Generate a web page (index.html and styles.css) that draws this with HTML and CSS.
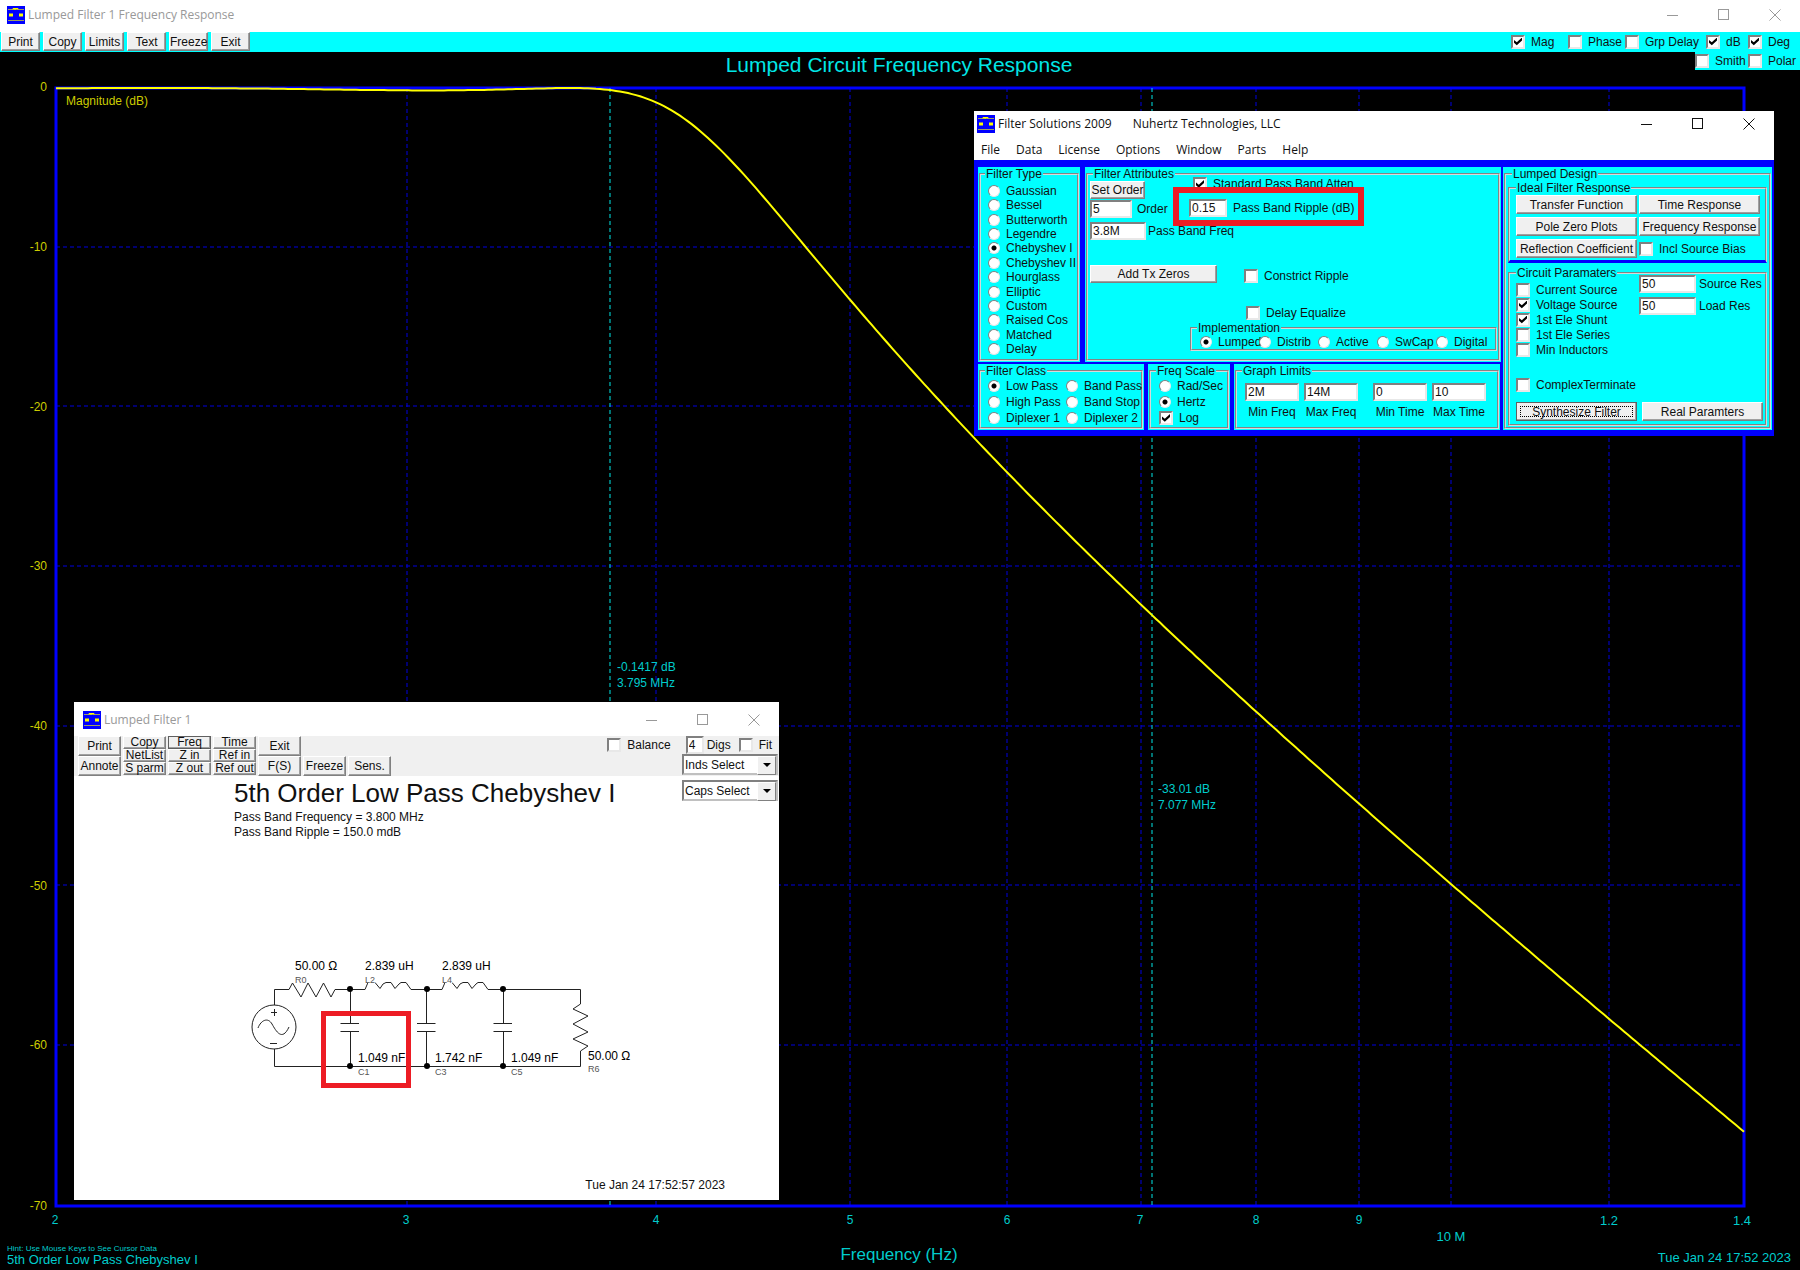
FILE: index.html
```html
<!DOCTYPE html>
<html lang="en">
<head>
  <meta charset="utf-8">
  <title>Lumped Filter 1 Frequency Response</title>
<link rel="stylesheet" href="styles.css">
</head>
<body>
  <svg class="defs" width="0" height="0">
    <symbol id="app" viewBox="0 0 18 18">
      <rect width="18" height="18" fill="#0000ff"/>
      <path d="M1 3.5h16M1 14.500h16" stroke="#a0a060" stroke-width="1"/>
      <path d="M6 3.500v-1h5v1M8 2.500v1.500" stroke="#ffff00" fill="none"/>
      <path d="M2 7.500h4v3h-4zM12 7.500h4v3h-4z" fill="#ffff00"/>
    </symbol>
    <symbol id="min" viewBox="0 0 12 12"><path d="M0 6.500h11" stroke="currentColor"/></symbol>
    <symbol id="max" viewBox="0 0 12 12"><rect x=".5" y=".5" width="10" height="10" fill="none" stroke="currentColor"/></symbol>
    <symbol id="close" viewBox="0 0 12 12"><path d="M.5 .5l11 11M11.500 .5l-11 11" stroke="currentColor"/></symbol>
  </svg>

  <div class="titlebar inactive">
    <svg class="logo"><use href="#app"/></svg>
    <span class="caption">Lumped Filter 1 Frequency Response</span>
    <button class="ctl" aria-label="Minimize"><svg><use href="#min"/></svg></button>
    <button class="ctl" aria-label="Maximize"><svg><use href="#max"/></svg></button>
    <button class="ctl" aria-label="Close"><svg><use href="#close"/></svg></button>
  </div>
  <div class="plot_bar">
    <button class="btn">Print</button>
    <button class="btn">Copy</button>
    <button class="btn">Limits</button>
    <button class="btn">Text</button>
    <button class="btn">Freeze</button>
    <button class="btn">Exit</button>
    <div class="traces">
      <label><input type="checkbox" checked>Mag</label>
      <label><input type="checkbox">Phase</label>
      <label><input type="checkbox">Grp Delay</label>
      <label><input type="checkbox" checked>dB</label>
      <label><input type="checkbox" checked>Deg</label>
    </div>
    <div class="traces2">
      <label><input type="checkbox">Smith</label>
      <label><input type="checkbox">Polar</label>
    </div>
  </div>

  <svg class="plot" viewBox="0 52 1800 1218">
    <text class="plot_title" x="899" y="72">Lumped Circuit Frequency Response</text>
    <g class="grid">
      <path d="M56 247H1743M56 406H1743M56 566H1743M56 726H1743M56 885H1743M56 1045H1743"/>
      <path d="M407 88V1206M656 88V1206M850 88V1206M1007 88V1206M1141 88V1206M1256 88V1206M1359 88V1206M1451 88V1206M1609 88V1206"/>
    </g>
    <rect class="frame" x="56" y="88" width="1688" height="1118"/>
    <path class="cursor" d="M610 88V1206M1152 88V1206"/>
    <path class="curve" id="curve"/>
    <g class="y_axis">
      <text x="47" y="91">0</text>
      <text x="47" y="251">-10</text>
      <text x="47" y="411">-20</text>
      <text x="47" y="570">-30</text>
      <text x="47" y="730">-40</text>
      <text x="47" y="890">-50</text>
      <text x="47" y="1049">-60</text>
      <text x="47" y="1210">-70</text>
      <text class="start" x="66" y="105">Magnitude (dB)</text>
    </g>
    <g class="x_axis">
      <text x="55" y="1224">2</text>
      <text x="406" y="1224">3</text>
      <text x="656" y="1224">4</text>
      <text x="850" y="1224">5</text>
      <text x="1007" y="1224">6</text>
      <text x="1140" y="1224">7</text>
      <text x="1256" y="1224">8</text>
      <text x="1359" y="1224">9</text>
      <text class="t13" x="1451" y="1241">10 M</text>
      <text class="t13" x="1609" y="1225">1.2</text>
      <text class="t13" x="1742" y="1225">1.4</text>
      <text class="start" x="617" y="671">-0.1417 dB</text>
      <text class="start" x="617" y="687">3.795 MHz</text>
      <text class="start" x="1158" y="793">-33.01 dB</text>
      <text class="start" x="1158" y="809">7.077 MHz</text>
      <text class="x_title" x="899" y="1260">Frequency (Hz)</text>
      <text class="start hint" x="7" y="1251">Hint: Use Mouse Keys to See Cursor Data</text>
      <text class="start t13" x="7" y="1264">5th Order Low Pass Chebyshev I</text>
      <text class="end t13" x="1791" y="1262">Tue Jan 24 17:52 2023</text>
    </g>
  </svg>

  <!-- filter setup -->
  <div class="window setup">
    <div class="titlebar">
      <svg class="logo"><use href="#app"/></svg>
      <span class="caption">Filter Solutions 2009</span>
      <span class="caption">Nuhertz Technologies, LLC</span>
      <button class="ctl" aria-label="Minimize"><svg><use href="#min"/></svg></button>
      <button class="ctl" aria-label="Maximize"><svg><use href="#max"/></svg></button>
      <button class="ctl" aria-label="Close"><svg><use href="#close"/></svg></button>
    </div>
    <div class="menu">
      <a href="#">File</a>
      <a href="#">Data</a>
      <a href="#">License</a>
      <a href="#">Options</a>
      <a href="#">Window</a>
      <a href="#">Parts</a>
      <a href="#">Help</a>
    </div>
    <div class="panels">
      <div class="left">
        <div class="top">
          <div class="panel">
            <fieldset class="type">
              <legend>Filter Type</legend>
              <label><input type="radio" name="type">Gaussian</label>
              <label><input type="radio" name="type">Bessel</label>
              <label><input type="radio" name="type">Butterworth</label>
              <label><input type="radio" name="type">Legendre</label>
              <label><input type="radio" name="type" checked>Chebyshev I</label>
              <label><input type="radio" name="type">Chebyshev II</label>
              <label><input type="radio" name="type">Hourglass</label>
              <label><input type="radio" name="type">Elliptic</label>
              <label><input type="radio" name="type">Custom</label>
              <label><input type="radio" name="type">Raised Cos</label>
              <label><input type="radio" name="type">Matched</label>
              <label><input type="radio" name="type">Delay</label>
            </fieldset>
          </div>
          <div class="panel">
            <fieldset class="attrs">
              <legend>Filter Attributes</legend>
              <div class="row row_atten">
                <button class="btn">Set Order</button>
                <label><input type="checkbox" checked>Standard Pass Band Atten</label>
              </div>
              <div class="row row_order">
                <label class="order"><input type="text" value="5">Order</label>
                <label class="ripple"><input type="text" value="0.15">Pass Band Ripple (dB)</label>
              </div>
              <label class="freq"><input type="text" value="3.8M">Pass Band Freq</label>
              <div class="row row_zeros">
                <button class="btn">Add Tx Zeros</button>
                <label><input type="checkbox">Constrict Ripple</label>
              </div>
              <label class="equalize"><input type="checkbox">Delay Equalize</label>
              <fieldset class="impl">
                <legend>Implementation</legend>
                <label><input type="radio" name="impl" checked>Lumped</label>
                <label><input type="radio" name="impl">Distrib</label>
                <label><input type="radio" name="impl">Active</label>
                <label><input type="radio" name="impl">SwCap</label>
                <label><input type="radio" name="impl">Digital</label>
              </fieldset>
            </fieldset>
          </div>
        </div>
        <div class="bottom">
          <div class="panel">
            <fieldset class="class">
              <legend>Filter Class</legend>
              <label><input type="radio" name="class" checked>Low Pass</label>
              <label><input type="radio" name="class">Band Pass</label>
              <label><input type="radio" name="class">High Pass</label>
              <label><input type="radio" name="class">Band Stop</label>
              <label><input type="radio" name="class">Diplexer 1</label>
              <label><input type="radio" name="class">Diplexer 2</label>
            </fieldset>
          </div>
          <div class="panel">
            <fieldset class="scale">
              <legend>Freq Scale</legend>
              <label><input type="radio" name="scale">Rad/Sec</label>
              <label><input type="radio" name="scale" checked>Hertz</label>
              <label><input type="checkbox" checked>Log</label>
            </fieldset>
          </div>
          <div class="panel">
            <fieldset class="limits">
              <legend>Graph Limits</legend>
              <label><input type="text" value="2M">Min Freq</label>
              <label><input type="text" value="14M">Max Freq</label>
              <label class="time"><input type="text" value="0">Min Time</label>
              <label><input type="text" value="10">Max Time</label>
            </fieldset>
          </div>
        </div>
      </div>
      <div class="panel">
        <fieldset class="design">
          <legend>Lumped Design</legend>
          <fieldset class="ideal">
            <legend>Ideal Filter Response</legend>
            <button class="btn">Transfer Function</button>
            <button class="btn">Time Response</button>
            <button class="btn">Pole Zero Plots</button>
            <button class="btn">Frequency Response</button>
            <button class="btn">Reflection Coefficient</button>
            <label><input type="checkbox">Incl Source Bias</label>
          </fieldset>
          <fieldset class="params">
            <legend>Circuit Paramaters</legend>
            <div class="row">
              <div class="checks">
                <label><input type="checkbox">Current Source</label>
                <label><input type="checkbox" checked>Voltage Source</label>
                <label><input type="checkbox" checked>1st Ele Shunt</label>
                <label><input type="checkbox">1st Ele Series</label>
                <label><input type="checkbox">Min Inductors</label>
                <label class="complex"><input type="checkbox">ComplexTerminate</label>
              </div>
              <div class="res">
                <label><input type="text" value="50">Source Res</label>
                <label><input type="text" value="50">Load Res</label>
              </div>
            </div>
            <div class="row actions">
              <button class="btn focused">Synthesize Filter</button>
              <button class="btn">Real Paramters</button>
            </div>
          </fieldset>
        </fieldset>
      </div>
    </div>
  </div>

  <!-- schematic -->
  <div class="window circuit">
    <div class="titlebar inactive">
      <svg class="logo"><use href="#app"/></svg>
      <span class="caption">Lumped Filter 1</span>
      <button class="ctl" aria-label="Minimize"><svg><use href="#min"/></svg></button>
      <button class="ctl" aria-label="Maximize"><svg><use href="#max"/></svg></button>
      <button class="ctl" aria-label="Close"><svg><use href="#close"/></svg></button>
    </div>
    <div class="tools">
      <div class="stack">
        <button class="btn">Print</button>
        <button class="btn">Annote</button>
      </div>
      <div class="stack thin">
        <button class="btn">Copy</button>
        <button class="btn">NetList</button>
        <button class="btn">S parm</button>
      </div>
      <div class="stack thin">
        <button class="btn pressed">Freq</button>
        <button class="btn">Z in</button>
        <button class="btn">Z out</button>
      </div>
      <div class="stack thin">
        <button class="btn">Time</button>
        <button class="btn">Ref in</button>
        <button class="btn">Ref out</button>
      </div>
      <div class="stack">
        <button class="btn">Exit</button>
        <button class="btn">F(S)</button>
      </div>
      <div class="stack low"><button class="btn">Freeze</button></div>
      <div class="stack low"><button class="btn">Sens.</button></div>
      <div class="options">
        <div class="row">
          <label class="balance"><input type="checkbox">Balance</label>
          <label class="digs"><input type="text" value="4">Digs</label>
          <label><input type="checkbox">Fit</label>
        </div>
        <span class="drop"><select aria-label="Inductors"><option>Inds Select</option></select></span>
        <span class="drop second"><select aria-label="Capacitors"><option>Caps Select</option></select></span>
      </div>
    </div>
    <div class="sheet">
      <h1>5th Order Low Pass Chebyshev I</h1>
      <p>Pass Band Frequency = 3.800 MHz</p>
      <p>Pass Band Ripple = 150.0 mdB</p>
      <svg class="schematic" viewBox="0 0 420 150" width="420" height="150">
        <g class="wire">
          <circle cx="44" cy="87" r="22"/>
          <path d="M28 88C31 80 38 77 42 84S52 102 59 87M41 72.500h6M44.500 69v7M40 103.500h7"/>
          <path d="M44.500 65V49.500H59L62.500 43 71 57 78 43 86 57 93.500 43 101 57 105 49.500H135L138 42.500H145L150 48.500 153 44 156 42.500H161L165 48.500 169 44 171 42.500H176L181 49.500H212L215 42.500H222L227 48.500 230 44 233 42.500H238L242 48.500 246 44 248 42.500H253L258 49.500H350.500V64L343 69 358 76 343 84 358 92 343 99 358 106 350.500 111V126.500H44.500V109"/>
          <path d="M120.500 49.500V83.500M110.500 83.500H129M110.500 91.500H129M120.500 91.500V126.500"/>
          <path d="M196.500 49.500V83.500M187 83.500H205.500M187 91.500H205.500M196.500 91.500V126.500"/>
          <path d="M273.500 49.500V83.500M263.500 83.500H282M263.500 91.500H282M273.500 91.500V126.500"/>
        </g>
        <g class="node">
          <circle cx="120" cy="49" r="3"/><circle cx="197" cy="49" r="3"/><circle cx="273" cy="49" r="3"/>
          <circle cx="120" cy="126" r="3"/><circle cx="197" cy="126" r="3"/><circle cx="273" cy="126" r="3"/>
        </g>
        <path fill="#fff" d="M138 35h7v9h-7zM215 35h7v9h-7z"/>
        <g class="value">
          <text x="65" y="30">50.00 Ω</text>
          <text x="135" y="30">2.839 uH</text>
          <text x="212" y="30">2.839 uH</text>
          <text x="128" y="122">1.049 nF</text>
          <text x="205" y="122">1.742 nF</text>
          <text x="281" y="122">1.049 nF</text>
          <text x="358" y="120">50.00 Ω</text>
        </g>
        <g class="ref">
          <text x="65" y="43">R0</text>
          <text x="135" y="43">L2</text>
          <text x="212" y="43">L4</text>
          <text x="128" y="135">C1</text>
          <text x="205" y="135">C3</text>
          <text x="281" y="135">C5</text>
          <text x="358" y="132">R6</text>
        </g>
        <rect class="mark" x="93.500" y="73.500" width="85" height="72"/>
      </svg>
      <p class="stamp">Tue Jan 24 17:52:57 2023</p>
    </div>
  </div>
<script src="script.js"></script>
</body>
</html>
```
FILE: script.js
```js
// 5th order Chebyshev I, 0.15 dB ripple, 3.8 MHz corner
let order = 5, ripple = 0.15, corner = 3.8;
let fmin = 2, fmax = 14;
let eps2 = Math.pow(10, ripple / 10) - 1;

function cheb(n, w) {
  if (w <= 1) {
    return Math.cos(n * Math.acos(w));
  }
  return Math.cosh(n * Math.acosh(w));
}

let d = "";
for (let x = 56; x <= 1744; x += 4) {
  let f = fmin * Math.pow(fmax / fmin, (x - 56) / 1688);
  let t = cheb(order, f / corner);
  let db = 10 * Math.log10(1 + eps2 * t * t);
  let y = 88 + db * 1118 / 70;
  d += (d ? "L" : "M") + x + " " + y.toFixed(1);
}
document.getElementById("curve").setAttribute("d", d);
```
FILE: styles.css
```css
* {
  box-sizing: border-box;
}
body {
  margin: 0;
  position: relative;
  background-color: #000;
  font-family: "Liberation Sans", Arial, sans-serif;
  font-size: 12px;
  line-height: 14px;
  color: #111;
}
.defs {
  position: absolute;
}

/* window chrome */
.titlebar {
  display: flex;
  align-items: center;
  height: 32px;
  padding: 0 0 2px 7px;
  background-color: #fff;
  font-family: "Open Sans", "Noto Sans", sans-serif;
}
.logo {
  width: 18px;
  height: 18px;
  margin-right: 3px;
}
.caption {
  margin-right: 21px;
  white-space: nowrap;
}
.inactive {
  color: #999;
}
.ctl {
  width: 51px;
  height: 20px;
  padding: 0;
  border: 0;
  background: none;
  color: inherit;
}
.caption + .ctl {
  margin-left: auto;
}
.ctl svg {
  display: block;
  width: 12px;
  height: 12px;
  margin: auto;
}
.window {
  position: absolute;
  background-color: #fff;
}

/* controls */
.btn {
  display: block;
  padding: 0;
  border: 1px solid;
  border-color: #fff #808080 #808080 #fff;
  box-shadow: inset -1px -1px #a0a0a0;
  background-color: #f0f0f0;
  color: #111;
  font: inherit;
  line-height: 14px;
  white-space: nowrap;
}
label {
  display: flex;
  align-items: center;
  white-space: nowrap;
}
input {
  appearance: none;
  flex: none;
  margin: 0;
  border-radius: 0;
  background-color: #fff;
  color: #111;
  font: inherit;
}
input[type=text] {
  height: 18px;
  padding: 0 1px;
  border: 2px solid;
  border-color: #808080 #e8e8e8 #e8e8e8 #808080;
}
input[type=checkbox] {
  width: 14px;
  height: 14px;
  margin-right: 6px;
  border: 2px solid;
  border-color: #808080 #e8e8e8 #e8e8e8 #808080;
}
input[type=checkbox]:checked::before {
  content: "";
  display: block;
  width: 8px;
  height: 8px;
  margin: 1px;
  background-color: #000;
  clip-path: polygon(0 30%, 35% 60%, 100% 0, 100% 38%, 35% 98%, 0 66%);
}
input[type=radio] {
  width: 12px;
  height: 12px;
  margin-right: 6px;
  border: 1px solid;
  border-color: #808080 #e8e8e8 #e8e8e8 #808080;
  border-radius: 50%;
}
input[type=radio]:checked {
  background-image: radial-gradient(circle, #000 2px, transparent 3px);
}
fieldset {
  min-width: 0;
  margin: 0;
  padding: 0;
  border: 2px groove #d8d8d8;
}
legend {
  height: 14px;
  margin-left: -3px;
  padding: 0 1px;
  white-space: nowrap;
}
.row {
  display: flex;
}

/* frequency plot */
.plot_bar {
  display: flex;
  gap: 3px;
  position: relative;
  height: 20px;
  padding: 0 0 1px 1px;
  background-color: #00ffff;
}
.plot_bar .btn {
  width: 39px;
}
.traces {
  display: grid;
  grid-template-columns: 57px 57px 81px 42px 52px;
  margin-left: auto;
}
.traces2 {
  display: grid;
  grid-template-columns: 53px 52px;
  position: absolute;
  top: 20px;
  right: 0;
  height: 18px;
  background-color: #00ffff;
}
.plot {
  display: block;
  width: 100%;
}
.plot_title {
  fill: #00e6e6;
  font-size: 21px;
  text-anchor: middle;
}
.grid path {
  stroke: #0000e0;
  stroke-dasharray: 4 3;
}
.frame {
  fill: none;
  stroke: #0000ff;
  stroke-width: 3;
}
.cursor {
  stroke: #00e6e6;
  stroke-dasharray: 4 3;
}
.curve {
  fill: none;
  stroke: #ffff00;
  stroke-width: 2;
}
.y_axis {
  fill: #cccc00;
  text-anchor: end;
}
.x_axis {
  fill: #00cccc;
  text-anchor: middle;
}
.plot .start {
  text-anchor: start;
}
.plot .end {
  text-anchor: end;
}
.t13 {
  font-size: 13px;
}
.x_title {
  font-size: 17px;
}
.hint {
  font-size: 8px;
}

/* filter setup */
.setup {
  top: 111px;
  left: 974px;
  width: 800px;
}
.setup .titlebar {
  height: 28px;
  padding: 0 0 2px 3px;
}
.menu {
  display: flex;
  gap: 16px;
  height: 21px;
  padding: 4px 7px;
  font-family: "Open Sans", "Noto Sans", sans-serif;
}
.menu a {
  color: #111;
  text-decoration: none;
}
.panels {
  display: grid;
  grid-template-columns: 522px 1fr;
  gap: 3px;
  padding: 7px 2px 6px 4px;
  background-color: #0000ff;
}
.left {
  display: flex;
  flex-direction: column;
  gap: 2px;
}
.top {
  display: grid;
  flex: 1;
  grid-template-columns: 102px 1fr;
  gap: 5px;
}
.bottom {
  display: grid;
  grid-template-columns: 166px 82px 1fr;
  gap: 4px;
}
.panel {
  padding: 0 1px 1px;
  background-color: #00ffff;
}
.panel > fieldset {
  height: 100%;
}
.type {
  display: flex;
  flex-direction: column;
  justify-content: space-between;
  padding: 3px 0 3px 7px;
}
.type label {
  height: 14px;
}
.attrs {
  padding: 0 1px 5px 2px;
}
.attrs > legend {
  margin-left: 3px;
}
.row_atten .btn {
  width: 55px;
  height: 18px;
}
.row_atten label {
  height: 14px;
  margin: -4px 0 0 48px;
}
.row_order {
  margin-top: 1px;
}
.order {
  width: 99px;
}
.order input {
  width: 42px;
  margin-right: 5px;
}
.ripple {
  position: relative;
  margin-top: -3px;
}
.ripple input {
  width: 38px;
  margin-right: 6px;
}
.ripple::after {
  content: "";
  position: absolute;
  inset: -10px -10px -8px -16px;
  border: 6px solid #ed1c24;
}
.freq {
  margin-top: 4px;
}
.freq input {
  width: 56px;
  margin-right: 2px;
}
.row_zeros {
  margin-top: 25px;
}
.row_zeros .btn {
  width: 127px;
  height: 18px;
  margin-right: 27px;
}
.row_zeros label {
  margin-top: 3px;
}
.equalize {
  margin: 23px 0 1px 156px;
}
.impl {
  display: grid;
  grid-template-columns: repeat(5, 59px);
  margin-left: 100px;
  padding: 0 0 1px 8px;
}
.impl label {
  height: 13px;
}
.class {
  display: grid;
  grid-template-columns: 78px 1fr;
  grid-auto-rows: 16px;
  padding: 0 0 1px 7px;
}
.scale {
  padding-left: 8px;
}
.scale label {
  height: 16px;
}
.limits {
  display: flex;
  gap: 5px;
  padding: 5px 0 0 8px;
}
.limits label {
  flex-direction: column;
  align-items: center;
  gap: 4px;
}
.limits input {
  width: 54px;
}
.limits .time {
  margin-left: 10px;
}
.design {
  padding: 0 2px 1px;
}
.design > legend {
  margin-left: 4px;
}
.ideal {
  display: grid;
  grid-template-columns: 121px 121px;
  grid-auto-rows: 19px;
  gap: 3px 2px;
  padding: 0 0 2px 6px;
  border-bottom: 3px solid #0000ff;
}
.ideal legend {
  margin-left: 0;
}
.params {
  margin-top: 3px;
}
.params legend {
  margin-left: 6px;
}
.params .row {
  padding-left: 6px;
}
.checks {
  width: 123px;
  padding-top: 2px;
}
.checks label {
  height: 15px;
}
.checks .complex {
  margin-top: 20px;
}
.res input {
  width: 57px;
  margin-right: 3px;
}
.res {
  display: flex;
  flex-direction: column;
  gap: 4px;
  margin-top: -5px;
}
.actions {
  gap: 5px;
  margin-top: 10px;
  padding-bottom: 3px;
}
.actions .btn {
  width: 121px;
  height: 19px;
}
.btn.focused {
  border-color: #606060;
  outline: 1px dotted #000;
  outline-offset: -5px;
}

/* schematic */
.circuit {
  top: 702px;
  left: 74px;
  width: 705px;
}
.circuit .titlebar {
  height: 34px;
  padding: 2px 0 0 9px;
}
.tools {
  display: flex;
  gap: 2px;
  height: 40px;
  padding-left: 4px;
  background-color: #f0f0f0;
}
.stack {
  display: flex;
  flex-direction: column;
  width: 43px;
}
.stack .btn {
  height: 20px;
}
.thin .btn {
  height: 13px;
  line-height: 11px;
}
.low {
  justify-content: flex-end;
}
.btn.pressed {
  border-color: #606060;
}
.options {
  display: flex;
  flex-direction: column;
  align-items: flex-end;
  margin: 0 1px 0 auto;
}
.options .row {
  height: 19px;
  padding-right: 6px;
}
.balance {
  margin-right: 15px;
}
.digs {
  margin-right: 8px;
}
.digs input {
  width: 18px;
  margin-right: 3px;
}
.drop {
  flex: none;
  position: relative;
  width: 96px;
  height: 21px;
}
.second {
  margin-top: 5px;
}
.drop select {
  appearance: none;
  width: 100%;
  height: 100%;
  padding: 0 1px;
  border: 2px solid;
  border-color: #808080 #c0c0c0 #c0c0c0 #808080;
  border-radius: 0;
  background-color: #fff;
  color: #111;
  font: inherit;
}
.drop::before {
  content: "";
  position: absolute;
  top: 2px;
  right: 2px;
  width: 17px;
  height: 17px;
  border: 1px solid;
  border-color: #fff #808080 #808080 #fff;
  background-color: #f0f0f0;
}
.drop::after {
  content: "";
  position: absolute;
  top: 9px;
  right: 7px;
  border: 4px solid transparent;
  border-top-color: #000;
  border-bottom: 0;
}
.sheet {
  padding: 0 54px 7px 160px;
  line-height: 15px;
}
.sheet h1 {
  margin: 0;
  font-size: 26px;
  font-weight: normal;
  line-height: 34px;
}
.sheet p {
  margin: 0;
}
.schematic {
  display: block;
  margin: 100px 0 88px -4px;
}
.wire {
  fill: none;
  stroke: #222;
}
.ref {
  font-size: 9px;
  fill: #555;
}
.mark {
  fill: none;
  stroke: #ed1c24;
  stroke-width: 5;
}
.sheet .stamp {
  text-align: right;
}
```
